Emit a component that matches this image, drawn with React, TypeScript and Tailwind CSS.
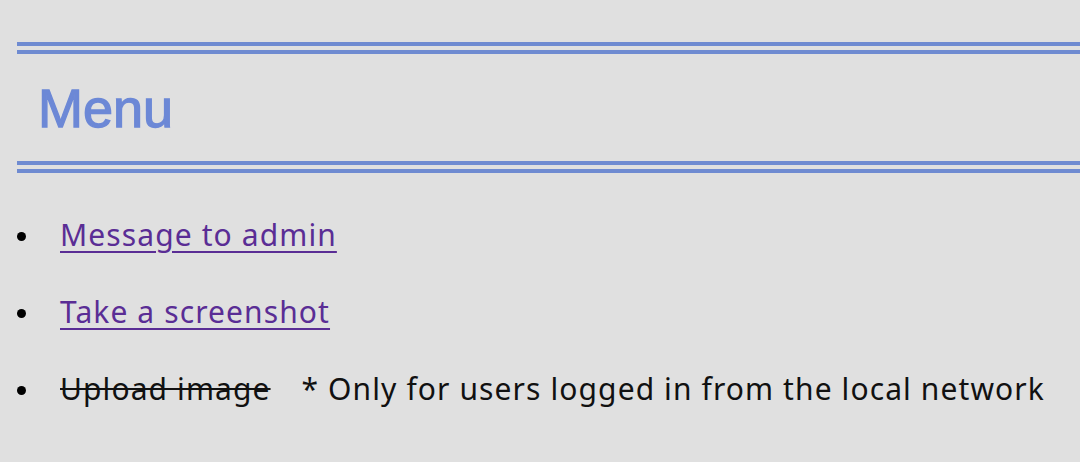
export default function App() {
  const items = [
    { text: "Message to admin", link: true },
    { text: "Take a screenshot", link: true },
  ];
  return (
    <div className="min-h-[462px] w-[1080px] overflow-hidden bg-[#e0e0e0] pt-[42px]">
      <div className="ml-[17px] border-y-[12px] border-double border-[#6f8bd1] pl-[21px] pt-[27px] pb-[26px]">
        <h1 className="font-['Liberation_Sans',Arial,sans-serif] text-[54px] leading-[54px] text-[#6c88d6] [-webkit-text-stroke:1.3px_#6c88d6]">
          Menu
        </h1>
      </div>
      <ul className="mt-[42px] flex flex-col gap-[37px] font-['Noto_Sans',sans-serif] text-[30px] leading-[40px] tracking-[1.1px]">
        {items.map((it) => (
          <li key={it.text} className="flex items-center">
            <span className="ml-[17px] mr-[34px] mt-[2px] h-[9px] w-[9px] rounded-full bg-black" />
            <a href="#" className="text-[#5a2d95] underline decoration-[2px] underline-offset-[5px]">
              {it.text}
            </a>
          </li>
        ))}
        <li className="flex items-center">
          <span className="ml-[17px] mr-[34px] mt-[2px] h-[9px] w-[9px] rounded-full bg-black" />
          <span className="text-[#111] line-through decoration-[2px]">Upload image</span>
          <span className="ml-[31px] text-[#111]">* Only for users logged in from the local network</span>
        </li>
      </ul>
    </div>
  );
}
